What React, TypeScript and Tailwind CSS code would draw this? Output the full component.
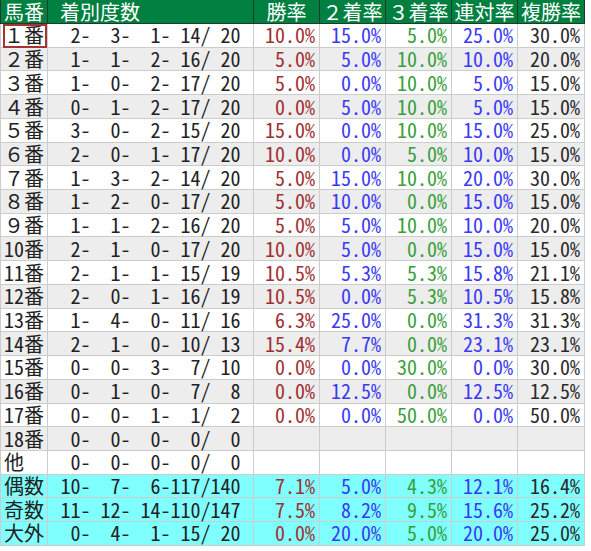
import React from "react";

type Row = {
  label: string;
  counts: number[];
  rates?: string[];
  kind: "w" | "g" | "c";
};

const rows: Row[] = [
  { label: "１番", counts: [2, 3, 1, 14, 20], rates: ["10.0", "15.0", "5.0", "25.0", "30.0"], kind: "w" },
  { label: "２番", counts: [1, 1, 2, 16, 20], rates: ["5.0", "5.0", "10.0", "10.0", "20.0"], kind: "g" },
  { label: "３番", counts: [1, 0, 2, 17, 20], rates: ["5.0", "0.0", "10.0", "5.0", "15.0"], kind: "w" },
  { label: "４番", counts: [0, 1, 2, 17, 20], rates: ["0.0", "5.0", "10.0", "5.0", "15.0"], kind: "g" },
  { label: "５番", counts: [3, 0, 2, 15, 20], rates: ["15.0", "0.0", "10.0", "15.0", "25.0"], kind: "w" },
  { label: "６番", counts: [2, 0, 1, 17, 20], rates: ["10.0", "0.0", "5.0", "10.0", "15.0"], kind: "g" },
  { label: "７番", counts: [1, 3, 2, 14, 20], rates: ["5.0", "15.0", "10.0", "20.0", "30.0"], kind: "w" },
  { label: "８番", counts: [1, 2, 0, 17, 20], rates: ["5.0", "10.0", "0.0", "15.0", "15.0"], kind: "g" },
  { label: "９番", counts: [1, 1, 2, 16, 20], rates: ["5.0", "5.0", "10.0", "10.0", "20.0"], kind: "w" },
  { label: "10番", counts: [2, 1, 0, 17, 20], rates: ["10.0", "5.0", "0.0", "15.0", "15.0"], kind: "g" },
  { label: "11番", counts: [2, 1, 1, 15, 19], rates: ["10.5", "5.3", "5.3", "15.8", "21.1"], kind: "w" },
  { label: "12番", counts: [2, 0, 1, 16, 19], rates: ["10.5", "0.0", "5.3", "10.5", "15.8"], kind: "g" },
  { label: "13番", counts: [1, 4, 0, 11, 16], rates: ["6.3", "25.0", "0.0", "31.3", "31.3"], kind: "w" },
  { label: "14番", counts: [2, 1, 0, 10, 13], rates: ["15.4", "7.7", "0.0", "23.1", "23.1"], kind: "g" },
  { label: "15番", counts: [0, 0, 3, 7, 10], rates: ["0.0", "0.0", "30.0", "0.0", "30.0"], kind: "w" },
  { label: "16番", counts: [0, 1, 0, 7, 8], rates: ["0.0", "12.5", "0.0", "12.5", "12.5"], kind: "g" },
  { label: "17番", counts: [0, 0, 1, 1, 2], rates: ["0.0", "0.0", "50.0", "0.0", "50.0"], kind: "w" },
  { label: "18番", counts: [0, 0, 0, 0, 0], kind: "g" },
  { label: "他", counts: [0, 0, 0, 0, 0], kind: "w" },
  { label: "偶数", counts: [10, 7, 6, 117, 140], rates: ["7.1", "5.0", "4.3", "12.1", "16.4"], kind: "c" },
  { label: "奇数", counts: [11, 12, 14, 110, 147], rates: ["7.5", "8.2", "9.5", "15.6", "25.2"], kind: "c" },
  { label: "大外", counts: [0, 4, 1, 15, 20], rates: ["0.0", "20.0", "5.0", "20.0", "25.0"], kind: "c" },
];

const headers = ["勝率", "２着率", "３着率", "連対率", "複勝率"];
const rateColors = ["text-[#a03030]", "text-[#3a3af5]", "text-[#38a038]", "text-[#3a3af5]", "text-[#2a2a2a]"];

const pad = (n: number, w: number) => String(n).padStart(w, " ");
const fmtCounts = (c: number[]) =>
  `${pad(c[0], 2)}-${pad(c[1], 3)}-${pad(c[2], 3)}-${pad(c[3], 3)}/${pad(c[4], 3)}`;

const bgFor = { w: "bg-white", g: "bg-[#ededed]", c: "bg-[#80ffff]" };
const cell = "h-[23.73px] flex items-center border-r border-b border-[#cccccc] whitespace-pre leading-[20px]";
const head = "h-[24px] flex items-center bg-[#008040] text-white border-r border-b border-[#1d3a2a] leading-[20px]";

export default function App() {
  return (
    <div className="w-[591px] h-[551px] bg-white font-['Noto_Sans_Mono_CJK_JP','Noto_Sans_CJK_JP',monospace] text-[20px] text-[#222222]">
      <div className="grid grid-cols-[48px_206px_66px_66px_66px_66px_67px] w-[585px]">
        <div className={`${head} border-l pl-[3px]`}>馬番</div>
        <div className={`${head} pl-[12px]`}>着別度数</div>
        {headers.map((h) => (
          <div key={h} className={`${head} justify-center`}>
            {h}
          </div>
        ))}
        {rows.map((r) => (
          <React.Fragment key={r.label}>
            <div className={`${cell} ${bgFor[r.kind]} border-l pl-[3px] relative`}>
              {r.label}
              {r.label === "１番" && (
                <span className="absolute left-[2px] right-0 top-0 -bottom-px border-2 border-[#a83232]" />
              )}
            </div>
            <div className={`${cell} ${bgFor[r.kind]} justify-center [font-feature-settings:'hwid']`}>
              {fmtCounts(r.counts)}
            </div>
            {[0, 1, 2, 3, 4].map((i) => (
              <div
                key={i}
                className={`${cell} ${bgFor[r.kind]} justify-end pr-[4px] [font-feature-settings:'hwid'] ${rateColors[i]}`}
              >
                {r.rates ? `${r.rates[i]}%` : ""}
              </div>
            ))}
          </React.Fragment>
        ))}
      </div>
    </div>
  );
}
